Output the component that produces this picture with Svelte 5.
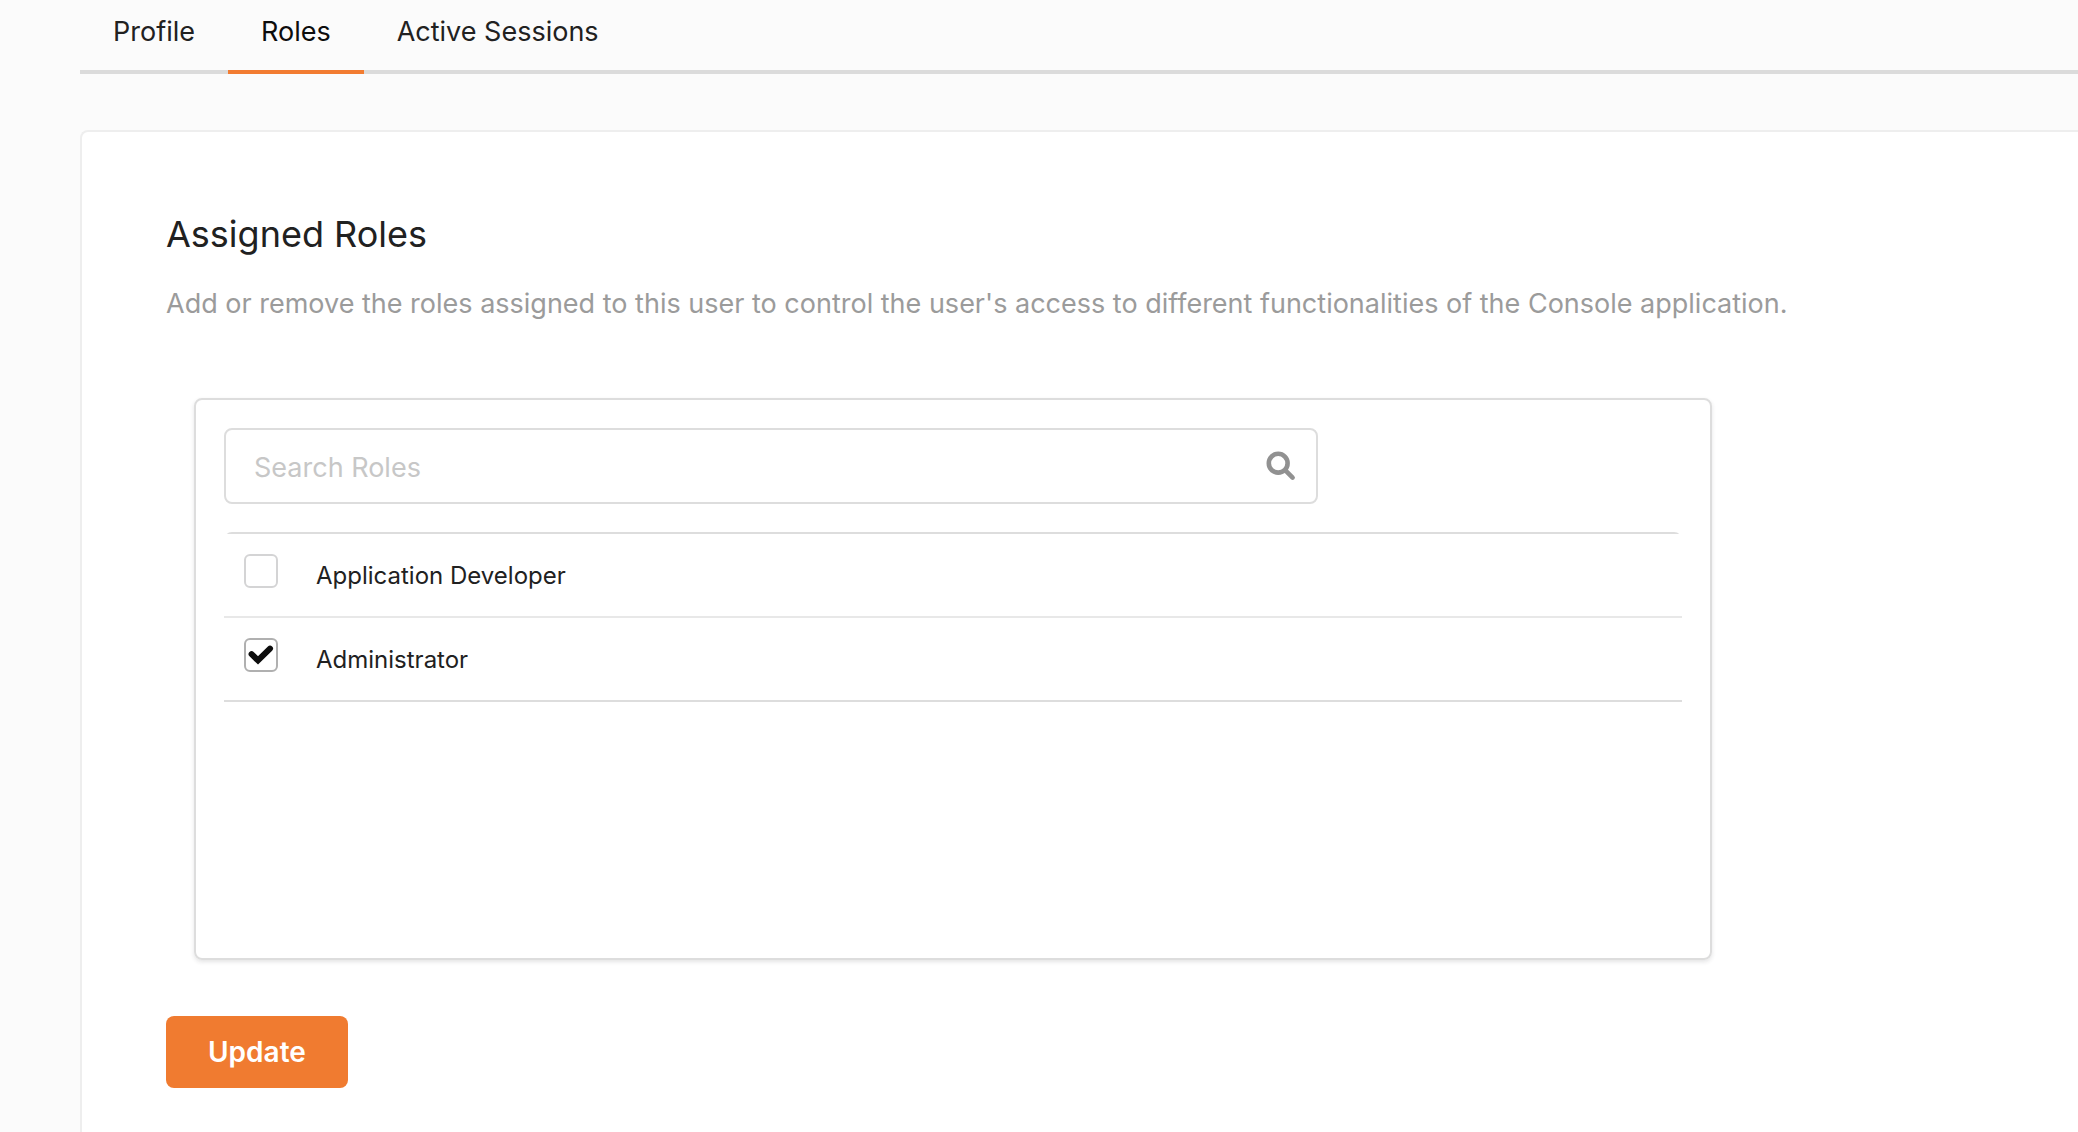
<script>
  const tabs = ['Profile', 'Roles', 'Active Sessions'];
  let activeTab = $state('Roles');
  let query = $state('');
  let roles = $state([
    { id: 'developer', name: 'Application Developer', assigned: false },
    { id: 'administrator', name: 'Administrator', assigned: true }
  ]);
  let visibleRoles = $derived(
    roles.filter((role) => role.name.toLowerCase().includes(query.trim().toLowerCase()))
  );
</script>

<div class="page">
  <div class="tabs" role="tablist">
    {#each tabs as tab}
      <button
        type="button"
        role="tab"
        class="tab"
        class:active={tab === activeTab}
        aria-selected={tab === activeTab}
        onclick={() => (activeTab = tab)}>{tab}</button>
    {/each}
  </div>

  <main class="card">
    <h2>Assigned Roles</h2>
    <p class="hint">
      Add or remove the roles assigned to this user to control the user's access to different functionalities of the Console application.
    </p>

    <form onsubmit={(event) => event.preventDefault()}>
      <section class="panel">
        <div class="search">
          <input type="text" placeholder="Search Roles" aria-label="Search Roles" bind:value={query} />
          <svg class="search-icon" viewBox="0 0 30 30" aria-hidden="true">
            <circle cx="12.2" cy="12.2" r="9.4" />
            <path d="M19.4 19.4 L26.6 26.6" />
          </svg>
        </div>

        <ul class="roles">
          {#each visibleRoles as role (role.id)}
            <li>
              <label>
                <span class="tick">
                  <input type="checkbox" bind:checked={role.assigned} />
                  <svg viewBox="0 0 34 34" aria-hidden="true">
                    <path d="M7.6 16.2 L14 22.4 L26 10.6" />
                  </svg>
                </span>
                <span class="name">{role.name}</span>
              </label>
            </li>
          {/each}
        </ul>
      </section>

      <button type="submit" class="update">Update</button>
    </form>
  </main>
</div>

<style>
  :global(body) {
    background: #fbfbfb;
  }

  .page {
    box-sizing: border-box;
    min-height: 100vh;
    padding-left: 80px;
    display: flex;
    flex-direction: column;
    font-family: Inter, 'Liberation Sans', sans-serif;
    font-size: 27px;
    line-height: 36px;
    color: #212121;
  }

  .tabs {
    display: flex;
    border-bottom: 4px solid #dbdbdb;
    margin-bottom: 56px;
  }

  .tab {
    margin: 0 0 -4px;
    padding: 14px 33px 20px;
    border: 0;
    border-bottom: 4px solid transparent;
    background: none;
    font: inherit;
    color: inherit;
    cursor: pointer;
  }

  .tab.active {
    border-color: #f27c31;
    color: #0d0d0d;
  }

  .card {
    flex: 1;
    padding: 78px 0 40px 84px;
    border: solid #eeeeee;
    border-width: 2px 0 0 2px;
    border-top-left-radius: 8px;
    background: #ffffff;
  }

  h2 {
    margin: 0 0 28px;
    font-size: 36px;
    line-height: 48px;
    font-weight: 400;
  }

  .hint {
    margin: 0 0 76px;
    color: #9b9b9b;
  }

  .panel {
    box-sizing: border-box;
    max-width: 1518px;
    min-height: 562px;
    margin: 0 28px 56px;
    padding: 28px;
    border: 2px solid #dddddd;
    border-radius: 8px;
    box-shadow: 0 2px 4px rgba(34, 36, 38, 0.12);
  }

  .search {
    box-sizing: border-box;
    width: 75%;
    height: 76px;
    display: flex;
    align-items: center;
    padding: 0 20px 0 28px;
    border: 2px solid #dddddd;
    border-radius: 8px;
  }

  .search input {
    flex: 1;
    min-width: 0;
    padding: 4px 0 0;
    border: 0;
    outline: 0;
    background: none;
    font: inherit;
    color: inherit;
  }

  .search input::placeholder {
    color: #c7c7c7;
    opacity: 1;
  }

  .search-icon {
    width: 30px;
    height: 30px;
    fill: none;
    stroke: #919191;
    stroke-width: 4.6;
    stroke-linecap: round;
  }

  .roles {
    margin: 28px 0 0;
    padding: 0;
    list-style: none;
    border-radius: 8px 8px 0 0;
    overflow: hidden;
  }

  /* Top rule, tapered at both ends by the list's rounded corners */
  .roles::before {
    content: '';
    display: block;
    height: 2px;
    background: #dddddd;
  }

  .roles li {
    border-bottom: 2px solid #e8e8e8;
  }

  .roles li:last-child {
    border-color: #dddddd;
  }

  .roles label {
    display: flex;
    align-items: flex-start;
    gap: 38px;
    padding: 20px 20px 28px;
    cursor: pointer;
  }

  .tick {
    display: grid;
    width: 34px;
    height: 34px;
  }

  .tick input,
  .tick svg {
    grid-area: 1 / 1;
    box-sizing: border-box;
    width: 34px;
    height: 34px;
    margin: 0;
  }

  .tick input {
    appearance: none;
    border: 2px solid #d4d4d5;
    border-radius: 6px;
    background: #ffffff;
  }

  .tick input:checked {
    border-color: #b0b0b0;
  }

  .tick svg {
    visibility: hidden;
    pointer-events: none;
    fill: none;
    stroke: #0d0d0d;
    stroke-width: 6;
    stroke-linecap: round;
    stroke-linejoin: miter;
  }

  .tick input:checked + svg {
    visibility: visible;
  }

  .name {
    box-sizing: border-box;
    height: 34px;
    padding-top: 6px;
    font-size: 24px;
    line-height: 32px;
  }

  .update {
    display: block;
    padding: 18px 42px;
    border: 0;
    border-radius: 8px;
    background: #f07b30;
    font: inherit;
    font-size: 28px;
    font-weight: 600;
    color: #ffffff;
    cursor: pointer;
  }
</style>
